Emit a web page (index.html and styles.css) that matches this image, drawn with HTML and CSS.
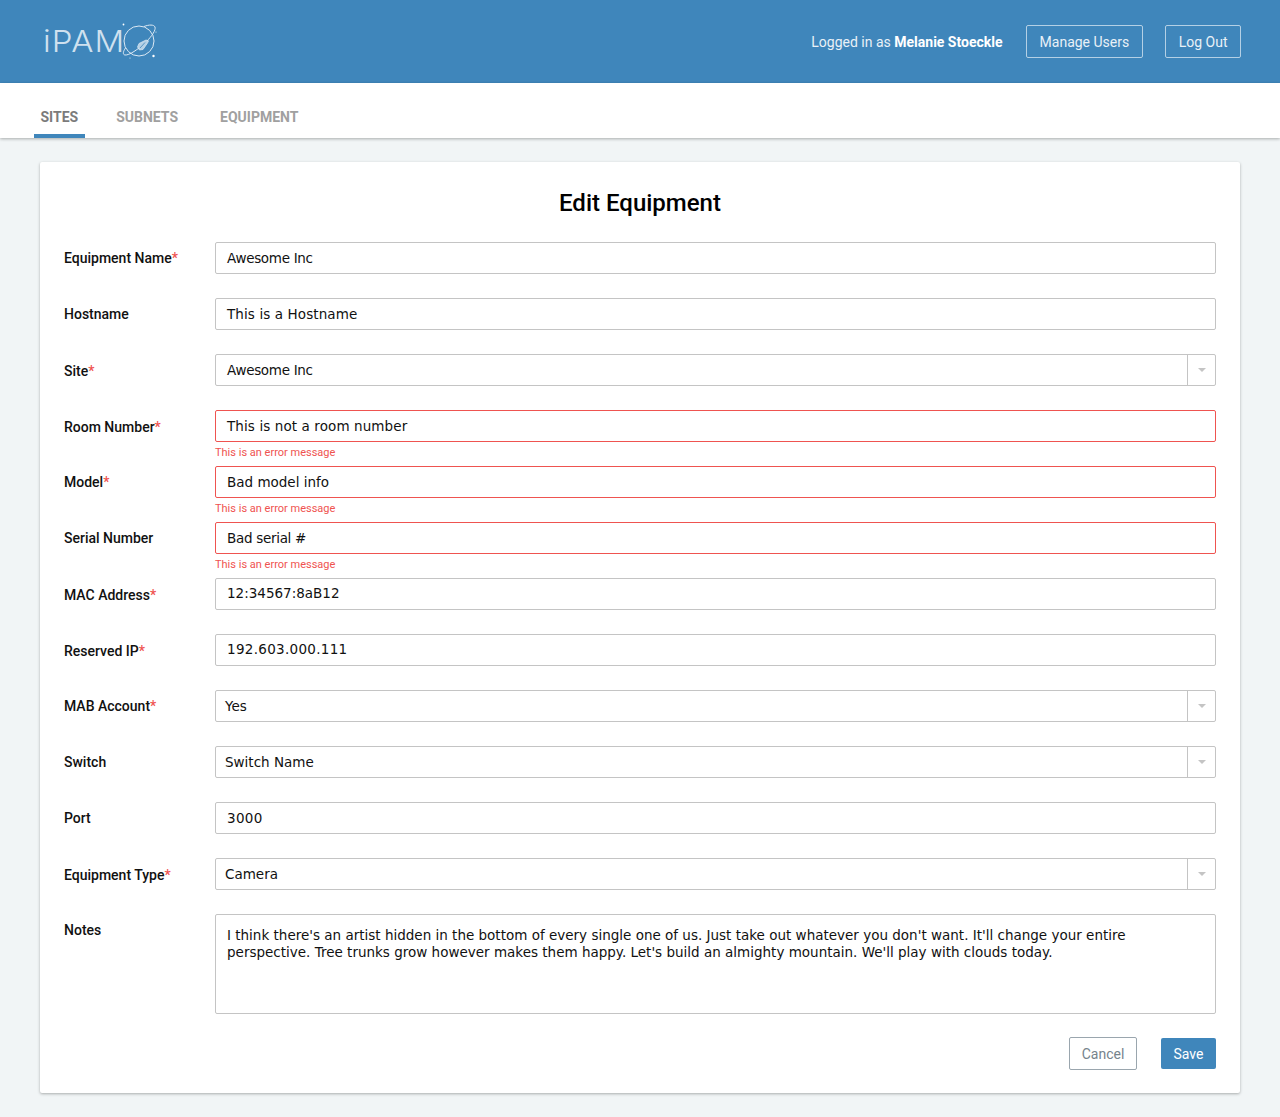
FILE: index.html
```html
<!DOCTYPE html>
<html lang="en">

<head>
    <meta charset="UTF-8">
    <meta name="viewport" content="width=device-width, initial-scale=1.0">
    <title>Edit Equipment</title>
    <link rel="stylesheet" href="styles.css">
</head>

<body>
    <!-- top bar -->
    <header class="topbar">
        <a class="logo" href="#">
            <span class="logo-text">iPAM</span>
            <svg class="logo-mark" width="36" height="40" viewBox="0 0 36 40" fill="none" stroke="#dce9f4" stroke-width="1">
                <circle cx="18" cy="20" r="15" />
                <path d="M23 5.5C28 3.5 33 3.5 34 6C35 9 31 15 25 21C17 28.5 8 34.5 4 34C1.5 33.7 2 30.5 4.5 27" />
                <path d="M16.5 26L18 22.5L25 19L27.5 19.8L26.5 22L22 28.5L18.5 29Z" fill="#b5d1e6" stroke-width="0.7" />
                <path d="M19 27L24 21.5" stroke="#3f86bb" stroke-width="0.8" />
                <circle cx="2.5" cy="3.5" r="0.9" fill="#fff" stroke="none" />
                <circle cx="32.5" cy="35" r="1.2" fill="#fff" stroke="none" />
                <circle cx="35" cy="11" r="0.5" fill="#fff" stroke="none" />
                <circle cx="9" cy="37" r="0.5" fill="#fff" stroke="none" />
            </svg>
        </a>
        <div class="topbar-right">
            <span class="user">Logged in as <b>Melanie Stoeckle</b></span>
            <a class="btn-outline" href="#">Manage Users</a>
            <a class="btn-outline btn-logout" href="#">Log Out</a>
        </div>
    </header>

    <!-- tabs -->
    <nav class="tabs">
        <a class="tab active" href="#">SITES</a>
        <a class="tab tab-subnets" href="#">SUBNETS</a>
        <a class="tab" href="#">EQUIPMENT</a>
    </nav>

    <main class="page">
        <form class="card">
            <h1 class="title">Edit Equipment</h1>

            <div class="field">
                <label class="field-label">Equipment Name<span class="req">*</span></label>
                <div class="field-body"><div class="input narrow">Awesome Inc</div></div>
            </div>
            <div class="field">
                <label class="field-label">Hostname</label>
                <div class="field-body"><div class="input loose">This is a Hostname</div></div>
            </div>
            <div class="field">
                <label class="field-label low">Site<span class="req">*</span></label>
                <div class="field-body">
                    <div class="input select narrow">
                        <span class="select-value">Awesome Inc</span>
                        <span class="select-arrow"></span>
                    </div>
                </div>
            </div>
            <div class="field">
                <label class="field-label low">Room Number<span class="req">*</span></label>
                <div class="field-body">
                    <div class="input error loose">This is not a room number</div>
                    <div class="error-msg">This is an error message</div>
                </div>
            </div>
            <div class="field">
                <label class="field-label">Model<span class="req">*</span></label>
                <div class="field-body">
                    <div class="input error">Bad model info</div>
                    <div class="error-msg">This is an error message</div>
                </div>
            </div>
            <div class="field">
                <label class="field-label">Serial Number</label>
                <div class="field-body">
                    <div class="input error narrow">Bad serial #</div>
                    <div class="error-msg">This is an error message</div>
                </div>
            </div>
            <div class="field">
                <label class="field-label low">MAC Address<span class="req">*</span></label>
                <div class="field-body"><div class="input raised">12:34567:8aB12</div></div>
            </div>
            <div class="field">
                <label class="field-label low">Reserved IP<span class="req">*</span></label>
                <div class="field-body"><div class="input raised wide">192.603.000.111</div></div>
            </div>
            <div class="field">
                <label class="field-label">MAB Account<span class="req">*</span></label>
                <div class="field-body">
                    <div class="input select">
                        <span class="select-value tight">Yes</span>
                        <span class="select-arrow"></span>
                    </div>
                </div>
            </div>
            <div class="field">
                <label class="field-label">Switch</label>
                <div class="field-body">
                    <div class="input select">
                        <span class="select-value tight">Switch Name</span>
                        <span class="select-arrow"></span>
                    </div>
                </div>
            </div>
            <div class="field">
                <label class="field-label">Port</label>
                <div class="field-body"><div class="input wide">3000</div></div>
            </div>
            <div class="field">
                <label class="field-label low">Equipment Type<span class="req">*</span></label>
                <div class="field-body">
                    <div class="input select">
                        <span class="select-value tight">Camera</span>
                        <span class="select-arrow"></span>
                    </div>
                </div>
            </div>
            <div class="field field-notes">
                <label class="field-label">Notes</label>
                <div class="field-body">
                    <div class="input textarea">I think there's an artist hidden in the bottom of every single one of us. Just take out whatever you don't want. It'll change your entire perspective. Tree trunks grow however makes them happy. Let's build an almighty mountain. We'll play with clouds today.</div>
                </div>
            </div>

            <div class="actions">
                <button class="btn-cancel" type="button">Cancel</button>
                <button class="btn-save" type="button">Save</button>
            </div>
        </form>
    </main>
</body>

</html>
```

FILE: styles.css
```css
body {
    margin: 0;
    background-color: #f1f5f6;
    font-family: Roboto, "Liberation Sans", sans-serif;
    font-size: 14px;
    color: #111;
}

a {
    text-decoration: none;
}

/* top bar */
.topbar {
    height: 83px;
    background-color: #3f86bb;
    display: flex;
    align-items: center;
    justify-content: space-between;
    padding: 0 39px 0 43px;
}

.logo {
    display: flex;
    align-items: center;
    margin-top: -2px;
}

/* letters in the logo are wider than any installed font */
.logo-text {
    display: block;
    width: 78px;
    font-family: Inter, "Open Sans", sans-serif;
    font-size: 30px;
    font-weight: 300;
    letter-spacing: 1px;
    line-height: 40px;
    color: #cfe1ef;
    transform: scaleX(1.1);
    transform-origin: left center;
}

.topbar-right {
    display: flex;
    align-items: center;
}

.user {
    color: #e9f1f7;
    margin-right: 23px;
}

.user b {
    font-weight: 700;
    color: #fff;
}

.btn-outline {
    height: 33px;
    box-sizing: border-box;
    padding: 0 13px;
    border: 1px solid #b4d0e5;
    border-radius: 2px;
    color: #e9f1f7;
    line-height: 33px;
}

.btn-logout {
    padding: 0 12.5px;
    margin-left: 22px;
}

/* tabs */
.tabs {
    height: 55px;
    background-color: #fff;
    display: flex;
    align-items: flex-end;
    padding-left: 34px;
    box-shadow: 0 1px 3px rgba(0, 0, 0, 0.3);
    position: relative;
}

.tab {
    height: 55px;
    box-sizing: border-box;
    padding: 0 6.5px;
    margin-right: 25px;
    line-height: 68px;
    font-weight: 700;
    color: #a0a0a0;
}

.tab-subnets {
    margin-right: 29px;
}

.tab.active {
    color: #7b7b7b;
    border-bottom: 4px solid #3f86bb;
}

/* card */
.page {
    padding: 24px 40px;
}

.card {
    background-color: #fff;
    border-radius: 2px;
    box-shadow: 0 1px 3px rgba(0, 0, 0, 0.3);
    padding: 24px 24px 23px;
}

.title {
    margin: 0 0 24px;
    height: 32px;
    line-height: 34px;
    text-align: center;
    font-size: 24px;
    font-weight: 500;
    color: #000;
}

.field {
    display: flex;
    height: 56px;
}

.field-notes {
    height: 124px;
}

.field-label {
    width: 151px;
    flex-shrink: 0;
    line-height: 32px;
    font-weight: 500;
}

.field-label.low {
    padding-top: 1px;
}

.req {
    color: #ef5350;
}

.field-body {
    flex: 1;
    min-width: 0;
}

.input {
    height: 32px;
    box-sizing: border-box;
    padding: 0 11px;
    border: 1px solid #c4c4c4;
    border-radius: 2px;
    font-family: "DejaVu Sans", sans-serif;
    font-size: 13.5px;
    line-height: 30px;
    color: #111;
}

.input.narrow {
    letter-spacing: -0.3px;
}

.input.loose {
    letter-spacing: 0.1px;
}

.input.wide {
    letter-spacing: 0.3px;
}

.input.raised {
    line-height: 28px;
}

.input.error {
    border-color: #ef5350;
}

.select {
    display: flex;
    padding: 0;
}

.select-value {
    flex: 1;
    padding-left: 11px;
}

.select-value.tight {
    padding-left: 9px;
}

.select-arrow {
    width: 27px;
    border-left: 1px solid #c4c4c4;
    display: flex;
    align-items: center;
    justify-content: center;
}

.select-arrow::after {
    content: "";
    border-left: 4px solid transparent;
    border-right: 4px solid transparent;
    border-top: 4px solid #c4c4c4;
}

.textarea {
    height: 100px;
    padding: 12px 11px;
    line-height: 17px;
}

.error-msg {
    margin-top: 3px;
    font-size: 11px;
    line-height: 15px;
    color: #ef5350;
}

/* buttons */
.actions {
    display: flex;
    justify-content: flex-end;
    align-items: flex-start;
    height: 32px;
}

.btn-cancel,
.btn-save {
    font-family: Roboto, "Liberation Sans", sans-serif;
    font-size: 14px;
    border-radius: 2px;
    padding: 1px 0 0;
    cursor: pointer;
}

.btn-cancel {
    width: 68px;
    height: 33px;
    margin: -1px 24px 0 0;
    background-color: #fff;
    border: 1px solid #9aa6ae;
    color: #76838c;
}

.btn-save {
    width: 55px;
    height: 31px;
    background-color: #3f86bb;
    border: none;
    color: #fff;
}
```
